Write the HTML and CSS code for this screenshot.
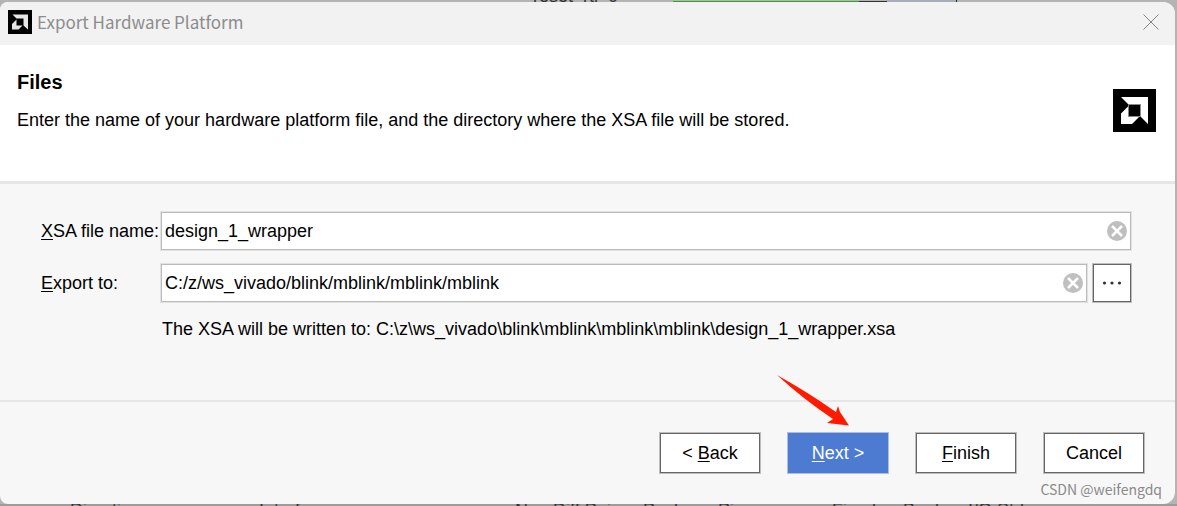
FILE: index.html
```html
<!DOCTYPE html>
<html lang="en">
<head>
<meta charset="utf-8">
<title>Export Hardware Platform</title>
<link rel="stylesheet" href="styles.css">
</head>
<body>
<div class="peek peek-top" aria-hidden="true">
  <span class="peek-net">reset_rtl_0</span>
  <span class="peek-wire"></span>
  <span class="peek-block"></span>
</div>
<main class="dialog">
  <header class="titlebar">
    <svg class="app-icon" viewBox="0 0 24 24" aria-hidden="true">
      <rect width="24" height="24"/>
      <path fill="#e6e6e6" d="M4.500 4.500H20V19.500L15.500 15.500V8.500H8.500ZM8.500 9.500V15.500H14.500L10.500 19.500H4V14Z"/>
    </svg>
    <h1 class="title">Export Hardware Platform</h1>
    <button class="close" type="button" aria-label="Close">
      <svg viewBox="0 0 16 16" aria-hidden="true"><path d="M.5.5L15.500 15.500M15.500.5L.5 15.500"/></svg>
    </button>
  </header>
  <section class="intro">
    <div class="intro-text">
      <h2 class="heading">Files</h2>
      <p class="lead">Enter the name of your hardware platform file, and the directory where the XSA file will be stored.</p>
    </div>
    <svg class="brand" viewBox="0 0 43 43" aria-hidden="true">
      <rect width="43" height="43"/>
      <path fill="#fff" d="M8 8H35V35L27.500 27.500V15.500H15.500ZM15.500 17V27.500H26.500L19 35H8V24.500Z"/>
      <path fill="none" stroke="#888" d="M15.500 27.500V15.500H27.500V27.500Z"/>
    </svg>
  </section>
  <form class="form" id="export">
    <label class="label" for="xsa"><u>X</u>SA file name:</label>
    <div class="field">
      <input class="input" id="xsa" type="text" value="design_1_wrapper" spellcheck="false">
      <button class="clear" type="button" aria-label="Clear file name">
        <svg viewBox="0 0 20 20" aria-hidden="true"><circle cx="10" cy="10" r="10"/><path d="M5 5L15 15M15 5L5 15"/></svg>
      </button>
    </div>
    <label class="label" for="dir"><u>E</u>xport to:</label>
    <div class="field-row">
      <div class="field">
        <input class="input" id="dir" type="text" value="C:/z/ws_vivado/blink/mblink/mblink/mblink" spellcheck="false">
        <button class="clear" type="button" aria-label="Clear directory">
          <svg viewBox="0 0 20 20" aria-hidden="true"><circle cx="10" cy="10" r="10"/><path d="M5 5L15 15M15 5L5 15"/></svg>
        </button>
      </div>
      <button class="browse" type="button" aria-label="Browse">
        <svg viewBox="0 0 20 4" aria-hidden="true"><circle cx="2.500" cy="2" r="1.600"/><circle cx="10" cy="2" r="1.600"/><circle cx="17.500" cy="2" r="1.600"/></svg>
      </button>
    </div>
    <p class="result">The XSA will be written to: C:\z\ws_vivado\blink\mblink\mblink\mblink\design_1_wrapper.xsa</p>
  </form>
  <footer class="footer">
    <button class="button" type="button">&lt; <u>B</u>ack</button>
    <div class="next">
      <button class="button primary" type="button"><u>N</u>ext &gt;</button>
      <svg class="arrow" viewBox="0 0 74 54" aria-hidden="true"><path fill="#ff1a00" d="M1 1Q33 19 57 36L60 38L62 32L64 38L73 51.500L51 49L57 45Q27 25 1 1Z"/></svg>
    </div>
    <button class="button" type="button"><u>F</u>inish</button>
    <button class="button" type="button">Cancel</button>
  </footer>
  <span class="watermark">CSDN @weifengdq</span>
</main>
<div class="peek peek-bottom" aria-hidden="true">
  <span>Direction</span><span>Interface</span><span>Neg Diff Pair</span><span>Package Pin</span><span>Fixed</span><span>Bank</span><span>I/O Std</span>
</div>
</body>
</html>
```

FILE: styles.css
```css
* { box-sizing: border-box; }

body {
  margin: 0;
  min-height: 100vh;
  display: flex;
  flex-direction: column;
  background: #b4b4b4;
  color: #000;
  font: 18px/22px "Liberation Sans", Arial, sans-serif;
}

h1, h2, p { margin: 0; }

button, input { font: inherit; color: inherit; }

button { padding: 0; }

svg { display: block; }

u { text-underline-offset: 2px; text-decoration-thickness: 1px; }

.peek {
  height: 2px;
  overflow: hidden;
  display: grid;
  color: #333;
}

.peek-top {
  grid-template-columns: 533px 140px 214px 70px 1fr;
  grid-template-rows: 2px;
  align-items: end;
}

.peek-net { grid-column: 2; line-height: 12px; }
.peek-wire { height: 1px; background: #3f9a35; border-right: 28px solid #333; }
.peek-block { height: 2px; background: #a8aeb9; border-right: 1px solid #222; }

.peek-bottom {
  grid-template-columns: 189px 256px 128px 189px 71px 65px 1fr;
  padding-left: 70px;
  background: #9c9c9c;
  line-height: 12px;
  white-space: nowrap;
}

.dialog {
  position: relative;
  flex: 1;
  display: flex;
  flex-direction: column;
  margin-right: 2px;
  overflow: hidden;
  background: #f7f7f7;
  border-radius: 8px 12px 12px 8px;
}

.titlebar {
  display: flex;
  align-items: center;
  gap: 5px;
  height: 43px;
  padding: 0 16px 3px 8px;
  background: #f2f2f2;
}

.app-icon { width: 24px; height: 24px; }

.title {
  flex: 1;
  color: #8c8c8c;
  font: 400 17px/24px "Noto Sans CJK SC", "Noto Sans", sans-serif;
}

.close {
  border: 0;
  background: none;
}

.close svg {
  width: 16px;
  height: 16px;
  fill: none;
  stroke: #858585;
}

.intro {
  display: flex;
  align-items: flex-end;
  justify-content: space-between;
  padding: 23px 19px 49px 17px;
  background: #fff;
  border-bottom: 3px solid #e6e6e6;
}

.intro-text { padding-bottom: 1px; }

.heading {
  margin-bottom: 13px;
  font-size: 20px;
  line-height: 28px;
}

.brand { width: 43px; height: 43px; }

.form {
  flex: 1;
  display: grid;
  grid-template-columns: 120px 1fr;
  grid-template-rows: 38px 38px 26px;
  row-gap: 14px;
  align-items: center;
  padding: 28px 44px 0 41px;
}

.field, .browse, .button { border: 1px solid #666; background: #fff; }

.field {
  flex: 1;
  display: flex;
  align-items: center;
  height: 38px;
  padding: 0 3px;
  border-color: #bbb;
  box-shadow: 0 0 0 1px #e2e2e2;
}

.input {
  flex: 1;
  min-width: 0;
  padding: 0;
  border: 0;
  outline: 0;
  background: none;
}

.clear {
  border: 0;
  background: none;
}

.clear svg {
  width: 20px;
  height: 20px;
  fill: #bfbfbf;
  stroke: none;
}

.clear path { stroke: #fff; stroke-width: 2.500; }

.field-row { display: flex; gap: 6px; }

.browse {
  display: grid;
  place-items: center;
  width: 38px;
  height: 38px;
  box-shadow: 0 0 0 1px #bdbdbd;
}

.browse svg { width: 20px; height: 4px; fill: #333; }

.result {
  grid-column: 2;
  padding-left: 1px;
}

.footer {
  display: flex;
  justify-content: flex-end;
  gap: 28px;
  padding: 31px 31px;
  border-top: 2px solid #e6e6e6;
}

.button {
  width: 100px;
  height: 40px;
  box-shadow: 0 0 0 1px #bdbdbd;
}

.primary {
  border-color: #4d7bd1;
  background: #4d7bd1;
  box-shadow: 0 0 0 1px #a9bfe8;
  color: #fff;
}

.next { position: relative; }

.arrow {
  position: absolute;
  left: -12px;
  bottom: 45px;
  width: 74px;
  height: 54px;
}

.watermark {
  position: absolute;
  right: 13px;
  bottom: 5px;
  color: #8a8a8a;
  font: 14px/20px "Noto Sans CJK SC", "Noto Sans", sans-serif;
}
```
